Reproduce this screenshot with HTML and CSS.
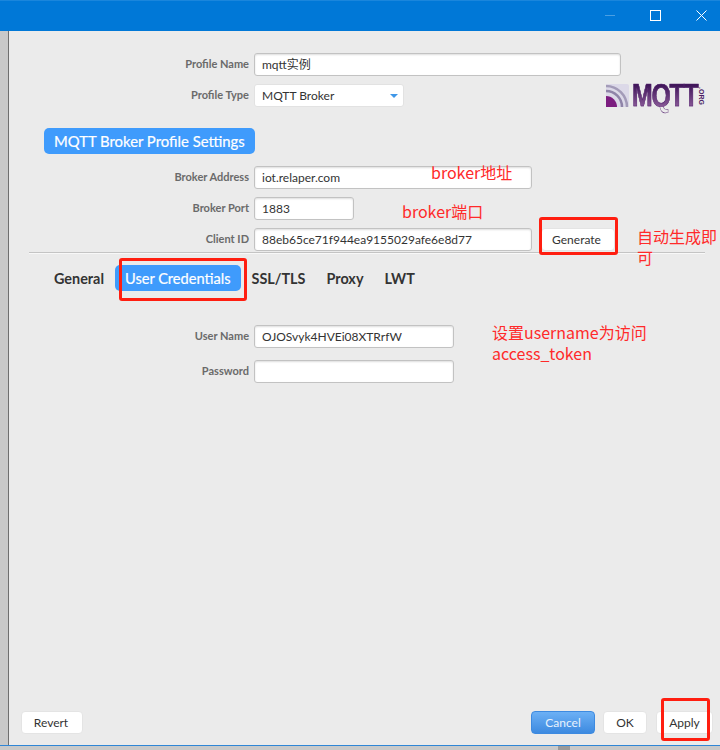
FILE: index.html
```html
<!DOCTYPE html>
<html>
<head>
	<meta charset="utf-8">
	<title>MQTT Broker Profile Settings</title>
	<link rel="stylesheet" href="styles.css">
</head>
<body>
<div class="titlebar">
	<span class="win-min"></span>
	<span class="win-max"></span>
	<svg width="11" height="11" viewBox="0 0 11 11"><path d="M.5.5l10 10M10.5.5l-10 10" stroke="#fff" stroke-width="1" fill="none"/></svg>
</div>
<div class="main">
	<div class="strip"></div>
	<div class="panel">
		<div class="form top">
			<div class="row">
				<label>Profile Name</label>
				<div class="field wide">mqtt实例</div>
			</div>
			<div class="row">
				<label>Profile Type</label>
				<div class="field select">MQTT Broker<i class="arrow"></i></div>
				<div class="logo">
					<svg width="23" height="23" viewBox="0 0 23 23">
						<rect width="23" height="23" rx="2" fill="#dcd9e8"/>
						<path d="M0 2a21 21 0 0 1 21 21" stroke="#a39bb8" stroke-width="2.5" fill="none"/>
						<path d="M0 7a16 16 0 0 1 16 16" stroke="#8f84a8" stroke-width="2.5" fill="none"/>
						<path d="M0 12a11 11 0 0 1 11 11H0z" fill="#7c1d80"/>
					</svg>
					<span class="logo-text">MQTT</span>
					<span class="logo-org">.ORG</span>
				</div>
			</div>
		</div>
		<div class="heading">MQTT Broker Profile Settings</div>
		<div class="form">
			<div class="row">
				<label>Broker Address</label>
				<div class="field mid">iot.relaper.com</div>
			</div>
			<div class="row">
				<label>Broker Port</label>
				<div class="field short">1883</div>
			</div>
			<div class="row tight">
				<label>Client ID</label>
				<div class="field mid">88eb65ce71f944ea9155029afe6e8d77</div>
				<button class="btn generate">Generate</button>
			</div>
		</div>
		<div class="divider"></div>
		<div class="tabs">
			<span class="tab">General</span>
			<span class="tab on">User Credentials</span>
			<span class="tab">SSL/TLS</span>
			<span class="tab">Proxy</span>
			<span class="tab">LWT</span>
		</div>
		<div class="form creds">
			<div class="row">
				<label>User Name</label>
				<div class="field user">OJOSvyk4HVEi08XTRrfW</div>
			</div>
			<div class="row">
				<label>Password</label>
				<div class="field user"></div>
			</div>
		</div>
		<div class="footer">
			<button class="btn revert">Revert</button>
			<button class="btn cancel">Cancel</button>
			<button class="btn ok">OK</button>
			<button class="btn apply">Apply</button>
		</div>
	</div>
</div>
<div class="bottom"><span class="bottom-tab"></span></div>

<!-- annotations drawn over the screenshot -->
<div class="note note-addr">broker地址</div>
<div class="note note-port">broker端口</div>
<div class="note note-gen">自动生成即可</div>
<div class="note note-user">设置username为访问<br>access_token</div>
<div class="mark mark-gen"></div>
<div class="mark mark-tab"></div>
<div class="mark mark-apply"></div>
</body>
</html>
```

FILE: styles.css
```css
html,body{margin:0;padding:0;}
body{position:relative;width:720px;height:750px;overflow:hidden;display:flex;flex-direction:column;background:#ebebeb;font:12px/16px Lato,"Noto Sans CJK SC",sans-serif;color:#333;}

.titlebar{height:31px;flex:none;background:#0078d7;border-top:1px solid #1a86dc;box-sizing:border-box;display:flex;justify-content:flex-end;align-items:center;gap:35px;padding:0 13px 2px 0;}
.win-min{width:10px;height:1px;background:#4a9fe3;}
.win-max{width:9px;height:9px;border:1px solid #fff;}

.main{flex:1;display:flex;min-height:0;}
.strip{width:8px;flex:none;background:#c9c9c9;border-right:1px solid #6f6f6f;}
.panel{flex:1;display:flex;flex-direction:column;padding:22px 0 11px;min-width:0;}

.form{display:flex;flex-direction:column;gap:8px;}
.row{display:flex;align-items:center;height:23px;padding-right:15px;}
.row label{width:245px;flex:none;text-align:right;padding:0 5px 2px 0;box-sizing:border-box;font-size:11px;font-weight:700;color:#6a6a6a;}
.field{height:23px;box-sizing:border-box;padding:0 7px;background:#fff;border:1px solid #c2c2c2;border-radius:3px;box-shadow:inset 0 1px 2px #ddd;line-height:22px;font-size:12px;color:#333;}
.wide{width:367px;}
.mid{width:278px;}
.short{width:100px;}
.user{width:200px;}
.select{width:150px;position:relative;border-color:#e2e2e2;box-shadow:none;}
.arrow{position:absolute;right:5px;top:9px;border:4px solid transparent;border-top-color:#3f97e8;border-bottom:0;}

.logo{margin-left:auto;display:flex;align-items:center;height:23px;color:#4b1d66;}
.logo-text{margin:0 -19px 0 3px;font:700 31px/23px "Liberation Sans",sans-serif;letter-spacing:-1.5px;transform:scaleX(.8);transform-origin:left;width:84px;flex:none;background:linear-gradient(#3c1256,#8a5a98);-webkit-background-clip:text;background-clip:text;color:transparent;-webkit-text-stroke:.5px #55246f;}
.logo-org{font:700 7px/8px "Liberation Sans",sans-serif;writing-mode:vertical-rl;}

.heading{align-self:flex-start;margin:21px 0 12px 35px;padding:0 10px;height:26px;line-height:27px;background:#3f9bfc;color:#fff;border-radius:5px;font-size:14.85px;-webkit-text-stroke:.2px #fff;}

.divider{height:1px;margin:1px 15px 0 20px;background:#c4c4c4;border-bottom:1px solid #f8f8f8;}

.tabs{display:flex;align-items:center;gap:1px;height:26px;margin:11px 0 34px 35px;}
.tab{padding:0 10px;height:26px;line-height:28px;border-radius:5px;font-size:14.4px;font-weight:700;color:#333;}
.tab.on{background:#3f9bfc;color:#fff;font-weight:400;font-size:14.6px;line-height:27px;-webkit-text-stroke:.2px #fff;}

.creds{gap:12px;}

.footer{margin-top:auto;display:flex;padding:0 7px 0 12px;}
.btn{height:23px;box-sizing:border-box;border:1px solid #e4e4e4;border-radius:4px;background:#fff;font:12px Lato,sans-serif;color:#333;padding:0;}
.generate{width:74px;margin-left:9px;padding-right:3px;}
.revert{width:62px;margin-right:auto;padding-right:2px;}
.cancel{width:64px;background:linear-gradient(#6cb0f5,#3d8ae0);border-color:#3d8ae0;color:#e8f2fd;}
.ok{width:44px;margin-left:8px;}
.apply{width:57px;margin-left:9px;}

.bottom{height:5px;flex:none;background:#c9c9c9;border-top:1px solid #2f86d6;box-sizing:border-box;position:relative;}
.bottom-tab{position:absolute;left:558px;top:0;width:12px;height:4px;background:#9a9a9a;}

.note{position:absolute;font:16px/21px "Noto Sans CJK SC",sans-serif;color:#ff2a2a;}
.note-addr{left:431px;top:162px;}
.note-port{left:402px;top:201px;}
.note-gen{left:637px;top:226px;width:80px;}
.note-user{left:492px;top:322px;}

.mark{position:absolute;box-sizing:border-box;border:3px solid #ff1e10;border-radius:3px;}
.mark-gen{left:539px;top:217px;width:79px;height:38px;}
.mark-tab{left:119px;top:258px;width:128px;height:43px;}
.mark-apply{left:661px;top:698px;width:49px;height:43px;}
```
